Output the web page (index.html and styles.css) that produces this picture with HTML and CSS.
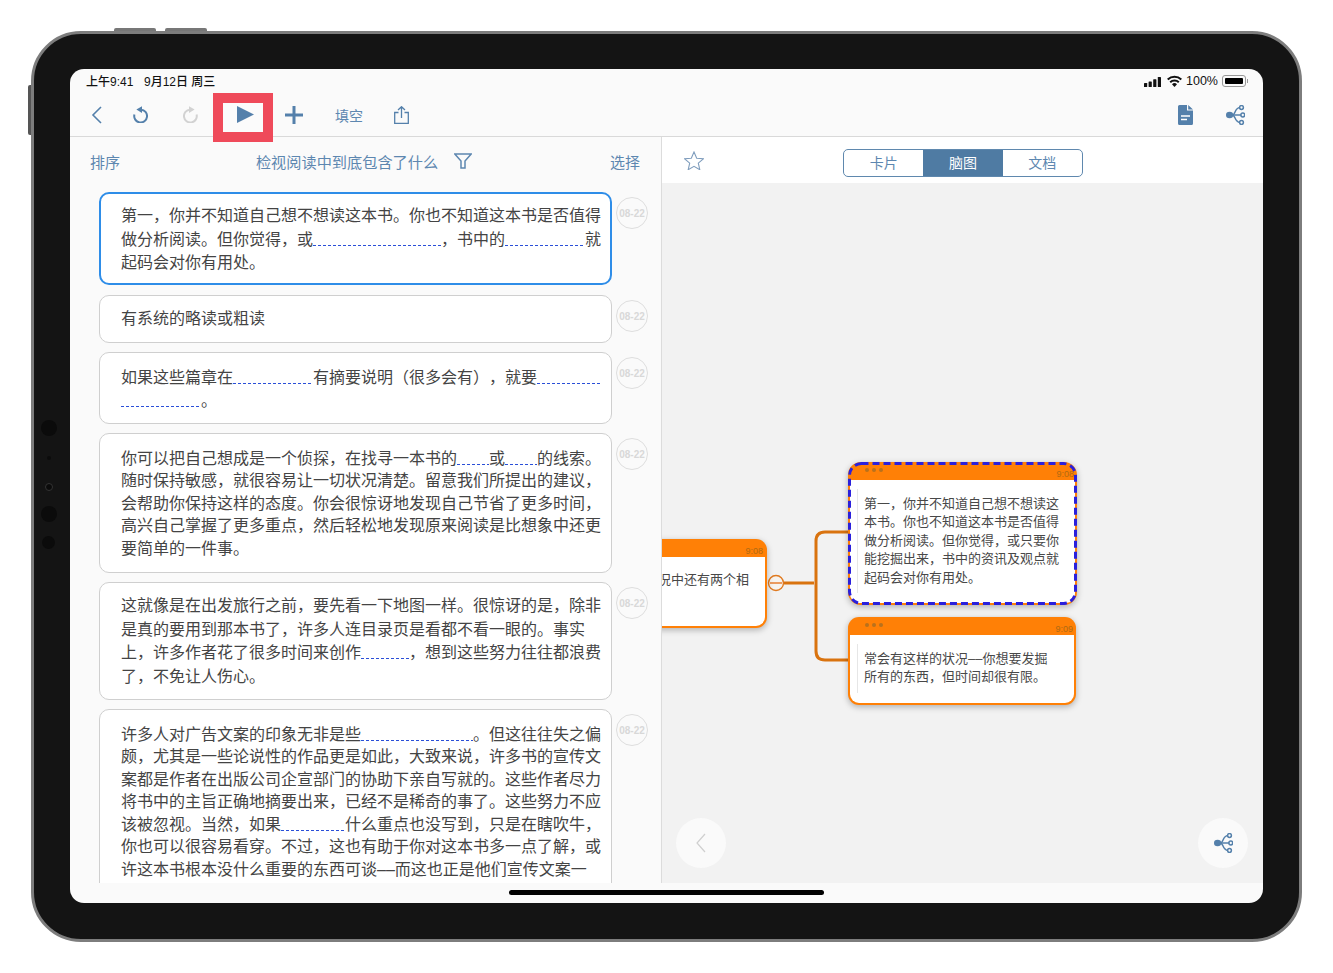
FILE: index.html
```html
<!DOCTYPE html>
<html lang="zh-CN">
<head>
<meta charset="utf-8">
<title>检视阅读</title>
<link rel="stylesheet" href="styles.css">
</head>
<body>
<div class="device">
  <span class="hw hw-top1"></span><span class="hw hw-top2"></span><span class="hw hw-side"></span>
  <span class="cam cam-a"></span><span class="cam cam-b"></span><span class="cam cam-c"></span><span class="cam cam-d"></span><span class="cam cam-e"></span>
  <div class="screen">
    <div class="status">
      <span class="time">上午9:41</span><span class="date">9月12日 周三</span>
      <svg class="st-signal" viewBox="0 0 17 10"><rect x="0" y="6" width="3.2" height="4" rx=".6"/><rect x="4.6" y="4.5" width="3.2" height="5.5" rx=".6"/><rect x="9.2" y="2.2" width="3.2" height="7.8" rx=".6"/><rect x="13.8" y="0" width="3.2" height="10" rx=".6"/></svg>
      <svg class="st-wifi" viewBox="0 0 15 12"><path d="M7.5 12 5 9.2a3.6 3.6 0 0 1 5 0Z"/><path d="M3.9 8 2.5 6.5a7.4 7.4 0 0 1 10 0L11.1 8a5.3 5.3 0 0 0-7.2 0Z"/><path d="M1.4 5.2 0 3.7a11 11 0 0 1 15 0l-1.4 1.5a9 9 0 0 0-12.2 0Z"/></svg>
      <span class="pct">100%</span>
      <span class="battery"><span class="battery-fill"></span></span><span class="battery-tip"></span>
    </div>
    <div class="toolbar">
      <svg class="tb tb-back" viewBox="0 0 11 18"><path d="M10 1 2 9l8 8" fill="none" stroke="#5480ab" stroke-width="1.6"/></svg>
      <svg class="tb tb-undo" viewBox="0 0 15 17"><path d="M8 3.7A6.4 6.4 0 1 1 1.4 8.6" fill="none" stroke="#5480ab" stroke-width="2"/><path d="M9 .2V7L3.4 3.6Z" fill="#5480ab"/></svg>
      <svg class="tb tb-redo" viewBox="0 0 15 17"><path d="M7 3.7A6.4 6.4 0 1 0 13.6 8.6" fill="none" stroke="#d2d2d2" stroke-width="2"/><path d="M6 .2V7l5.6-3.4Z" fill="#d2d2d2"/></svg>
      <div class="play"><svg class="play-icon" viewBox="0 0 17 17"><path d="M0 0 17 8.5 0 17Z" fill="#5480ab"/></svg></div>
      <svg class="tb tb-plus" viewBox="0 0 18 18"><path d="M9 0v18M0 9h18" stroke="#5480ab" stroke-width="3"/></svg>
      <span class="tb-text">填空</span>
      <svg class="tb tb-share" viewBox="0 0 15 18"><path d="M4.5 6.5H.7v10.8h13.6V6.5h-3.8M7.5 12V1M4 4l3.5-3.3L11 4" fill="none" stroke="#5480ab" stroke-width="1.3"/></svg>
      <svg class="tb tb-doc" viewBox="0 0 15 20"><path d="M1.5 0H9v5.5h6V18.5a1.5 1.5 0 0 1-1.5 1.5h-12A1.5 1.5 0 0 1 0 18.5v-17A1.5 1.5 0 0 1 1.5 0ZM10.2 0 15 4.4h-4.8Z" fill="#5480ab"/><path d="M3 11h9M3 14.5h6" stroke="#fff" stroke-width="1.6"/></svg>
      <svg class="tb tb-map" viewBox="0 0 19 20"><ellipse cx="3.6" cy="10" rx="3.6" ry="3.2" fill="#5480ab"/><g fill="none" stroke="#5480ab" stroke-width="1.5"><path d="M3 10h12"/><path d="M6 10c4 0 2-7 8-7.5"/><path d="M6 10c4 0 2 7 8 7.5"/><circle cx="15.5" cy="2.5" r="1.9"/><circle cx="16.8" cy="10" r="1.9"/><circle cx="15.5" cy="17.5" r="1.9"/></g></svg>
    </div>
    <div class="main">
      <section class="left">
        <div class="left-head">
          <span class="link">排序</span>
          <span class="head-title">检视阅读中到底包含了什么<svg class="funnel" viewBox="0 0 18 16"><path d="M.8 1h16.4L11 8v7H7V8Z" fill="none" stroke="#5d87b0" stroke-width="1.5"/></svg></span>
          <span class="link">选择</span>
        </div>
        <div class="list">
          <div class="row">
            <div class="note note-active">第一，你并不知道自己想不想读这本书。你也不知道这本书是否值得做分析阅读。但你觉得，或<span class="blank b8"></span>，书中的<span class="blank b5"></span>就起码会对你有用处。</div>
            <span class="stamp">08-22</span>
          </div>
          <div class="row">
            <div class="note note-single">有系统的略读或粗读</div>
            <span class="stamp">08-22</span>
          </div>
          <div class="row">
            <div class="note note-wide">如果这些篇章在<span class="blank b5"></span>有摘要说明（很多会有），就要<span class="blank b4"></span><span class="blank b5"></span>。</div>
            <span class="stamp">08-22</span>
          </div>
          <div class="row">
            <div class="note note-plain">你可以把自己想成是一个侦探，在找寻一本书的<span class="blank b2"></span>或<span class="blank b2"></span>的线索。随时保持敏感，就很容易让一切状况清楚。留意我们所提出的建议，会帮助你保持这样的态度。你会很惊讶地发现自己节省了更多时间，高兴自己掌握了更多重点，然后轻松地发现原来阅读是比想象中还更要简单的一件事。</div>
            <span class="stamp">08-22</span>
          </div>
          <div class="row">
            <div class="note note-loose">这就像是在出发旅行之前，要先看一下地图一样。很惊讶的是，除非是真的要用到那本书了，许多人连目录页是看都不看一眼的。事实上，许多作者花了很多时间来创作<span class="blank b3"></span>，想到这些努力往往都浪费了，不免让人伤心。</div>
            <span class="stamp">08-22</span>
          </div>
          <div class="row">
            <div class="note note-plain">许多人对广告文案的印象无非是些<span class="blank b7"></span>。但这往往失之偏颇，尤其是一些论说性的作品更是如此，大致来说，许多书的宣传文案都是作者在出版公司企宣部门的协助下亲自写就的。这些作者尽力将书中的主旨正确地摘要出来，已经不是稀奇的事了。这些努力不应该被忽视。当然，如果<span class="blank b4"></span>什么重点也没写到，只是在瞎吹牛，你也可以很容易看穿。不过，这也有助于你对这本书多一点了解，或许这本书根本没什么重要的东西可谈––而这也正是他们宣传文案一</div>
            <span class="stamp">08-22</span>
          </div>
        </div>
      </section>
      <section class="right">
        <div class="right-head">
          <svg class="star" viewBox="0 0 20 19"><path d="M10 1l2.7 6.2 6.6.6-5 4.4 1.5 6.5L10 15.3l-5.8 3.4 1.5-6.5-5-4.4 6.6-.6Z" fill="none" stroke="#7f9dbd" stroke-width="1.1"/></svg>
          <div class="segments">
            <span class="seg">卡片</span>
            <span class="seg seg-on">脑图</span>
            <span class="seg">文档</span>
          </div>
        </div>
        <div class="canvas">
          <svg class="links" viewBox="0 0 601 700">
            <path d="M122 400H152M186 349H163Q154 349 154 358V468Q154 477 163 477H186" fill="none" stroke="#d9730f" stroke-width="3"/>
            <circle cx="114" cy="400" r="7.5" fill="#f7f3ee" stroke="#e07a20" stroke-width="1.4"/>
            <path d="M108 400h12" stroke="#e8853a" stroke-width="1.6"/>
          </svg>
          <div class="node node-a">
            <div class="node-bar"><span class="node-time node-time-a">9:08</span></div>
            <div class="node-body node-body-a">情况中还有两个相</div>
          </div>
          <div class="node node-b">
            <div class="node-bar"><span class="node-dots"><i></i><i></i><i></i></span><span class="node-time">9:08</span></div>
            <div class="node-body"><p class="node-text">第一，你并不知道自己想不想读这本书。你也不知道这本书是否值得做分析阅读。但你觉得，或只要你能挖掘出来，书中的资讯及观点就起码会对你有用处。</p></div>
            <svg class="node-dash" viewBox="0 0 229 143"><rect x="1.5" y="1.5" width="226" height="140" rx="12" fill="none" stroke="#2a20dc" stroke-width="3" stroke-dasharray="7 4"/></svg>
          </div>
          <div class="node node-c">
            <div class="node-bar"><span class="node-dots"><i></i><i></i><i></i></span><span class="node-time">9:09</span></div>
            <div class="node-body"><p class="node-text">常会有这样的状况––你想要发掘所有的东西，但时间却很有限。</p></div>
          </div>
          <div class="round round-l"><svg class="round-chev" viewBox="0 0 10 20"><path d="M9 1 1 10l8 9" fill="none" stroke="#cfcfcf" stroke-width="1.2"/></svg></div>
          <div class="round round-r"><svg class="round-map" viewBox="0 0 19 20"><ellipse cx="3.6" cy="10" rx="3.6" ry="3.2" fill="#5480ab"/><g fill="none" stroke="#5480ab" stroke-width="1.5"><path d="M3 10h12"/><path d="M6 10c4 0 2-7 8-7.5"/><path d="M6 10c4 0 2 7 8 7.5"/><circle cx="15.5" cy="2.5" r="1.9"/><circle cx="16.8" cy="10" r="1.9"/><circle cx="15.5" cy="17.5" r="1.9"/></g></svg></div>
        </div>
      </section>
    </div>
    <div class="home"><span class="home-bar"></span></div>
  </div>
</div>
</body>
</html>
```
FILE: styles.css
```css
* { box-sizing: border-box; }
html, body { margin: 0; background: #fff; }
body {
  height: 973px;
  overflow: hidden;
  font-family: "Liberation Sans", "Noto Sans CJK SC", sans-serif;
  color: #484848;
  text-spacing-trim: space-all;
}
.device {
  position: relative;
  width: 1271px;
  height: 911px;
  margin: 31px 0 0 31px;
  padding: 35px 36px 36px;
  background: #141414;
  border: 3px solid #7d7d7d;
  border-radius: 50px;
}
.hw { position: absolute; background: #777; }
.hw-top1 { left: 80px; top: -6px; width: 42px; height: 3px; border-radius: 2px 2px 0 0; }
.hw-top2 { left: 131px; top: -6px; width: 42px; height: 3px; border-radius: 2px 2px 0 0; }
.hw-side { left: -6px; top: 51px; width: 3px; height: 50px; border-radius: 2px 0 0 2px; background: #555; }
.cam { position: absolute; border-radius: 50%; background: #0b0b0b; }
.cam-a { left: 7px; top: 386px; width: 16px; height: 16px; }
.cam-b { left: 13px; top: 422px; width: 4px; height: 4px; }
.cam-c { left: 11px; top: 449px; width: 8px; height: 8px; background: #0b0b0b; border: 1px solid #333; }
.cam-d { left: 7px; top: 472px; width: 16px; height: 16px; }
.cam-e { left: 8px; top: 502px; width: 13px; height: 13px; }

.screen {
  display: flex;
  flex-direction: column;
  width: 1193px;
  height: 834px;
  overflow: hidden;
  background: #fafafa;
  border-radius: 14px;
}

.status {
  display: flex;
  align-items: center;
  flex: none;
  height: 24px;
  padding: 0 15px 0 16px;
  font-size: 12px;
  font-weight: 500;
  color: #111;
}
.time { width: 58px; margin-top: -2px; }
.date { flex: 1; margin-top: -2px; }
.st-signal { width: 17px; height: 10px; margin-top: 1px; fill: #111; }
.st-wifi { width: 15px; height: 12px; margin-left: 6px; margin-top: -1px; fill: #111; }
.pct { margin: -1px 0 0 4px; width: 31px; font-size: 12.5px; text-align: right; }
.battery {
  display: block;
  width: 24px;
  height: 12px;
  margin-left: 5px;
  padding: 2px;
  border: 1px solid #999;
  border-radius: 3px;
}
.battery-fill { display: block; height: 100%; background: #000; border-radius: 1px; }
.battery-tip { width: 1px; height: 4px; margin-left: 1px; background: #999; }

.toolbar {
  display: flex;
  align-items: center;
  flex: none;
  height: 44px;
  padding: 0 18px 0 21px;
  border-bottom: 1px solid #d9d9d9;
}
.tb { display: block; flex: none; }
.tb-back { width: 11px; height: 18px; }
.tb-undo { width: 15px; height: 17px; margin-left: 31px; }
.tb-redo { width: 15px; height: 17px; margin-left: 35px; }
.play {
  position: relative;
  z-index: 2;
  display: flex;
  align-items: center;
  justify-content: center;
  flex: none;
  width: 40px;
  height: 29px;
  margin: 5px 0 0 24.5px;
  padding: 0 0 5px 5px;
  background: #fbfbfb;
  outline: 10px solid #ef4a5a;
}
.play-icon { width: 17px; height: 17px; }
.tb-plus { width: 18px; height: 18px; margin-left: 22.5px; }
.tb-text { flex: none; width: 28px; margin-left: 32px; font-size: 14px; color: #5d87b0; white-space: nowrap; }
.tb-share { width: 15px; height: 18px; margin-left: 31px; }
.tb-doc { width: 15px; height: 20px; margin-left: auto; }
.tb-map { width: 19px; height: 20px; margin-left: 33px; }

.main { display: flex; flex: none; height: 746px; }

.left {
  flex: none;
  width: 592px;
  overflow: hidden;
  border-right: 1px solid #dcdcdc;
}
.left-head {
  display: flex;
  align-items: center;
  justify-content: space-between;
  height: 48px;
  padding: 0 21px 0 20px;
  font-size: 15px;
  color: #5d87b0;
}
.head-title { display: flex; align-items: center; margin-left: -2px; font-size: 15.2px; }
.funnel { width: 18px; height: 16px; margin-left: 16px; }
.list { padding: 7px 0 0 29px; }
.row { display: flex; align-items: flex-start; margin-bottom: 9px; }
.row:first-child { margin-bottom: 10px; }

.note {
  flex: none;
  width: 513px;
  padding: 0 8px 0 21px;
  background: #fff;
  border: 1px solid #cfcfcf;
  border-radius: 10px;
  font-size: 16px;
  line-height: 22.5px;
  color: #444;
}
.note-plain { padding-top: 13.75px; padding-bottom: 11.75px; }
.note-single { padding-top: 11.75px; padding-bottom: 11.75px; }
.note-wide { padding-top: 13px; padding-bottom: 11px; line-height: 23px; }
.note-loose { padding-top: 11.3px; padding-bottom: 11.1px; line-height: 23.4px; }
.note-active {
  padding: 10.3px 7px 8.5px 20px;
  line-height: 23.4px;
  border: 2px solid #2e8de8;
}

.blank {
  display: inline-block;
  height: 1px;
  background: repeating-linear-gradient(90deg, #2a4fd8 0 3px, transparent 3px 5px);
  vertical-align: -1px;
}
.b2 { width: 32px; }
.b3 { width: 48px; }
.b4 { width: 64px; }
.b5 { width: 80px; }
.b7 { width: 112px; }
.b8 { width: 128px; }

.stamp {
  display: flex;
  align-items: center;
  justify-content: center;
  flex: none;
  width: 32px;
  height: 32px;
  margin: 5px 0 0 4px;
  border: 1.5px solid #dedede;
  border-radius: 50%;
  font-size: 10px;
  font-weight: 700;
  color: #d8d8d8;
  white-space: nowrap;
}

.right { display: flex; flex-direction: column; flex: 1; background: #fff; }
.right-head { display: flex; align-items: center; flex: none; height: 46px; padding-left: 22px; }
.star { width: 20px; height: 19px; }
.segments {
  display: flex;
  width: 240px;
  height: 28px;
  margin: 6px 0 0 139px;
  overflow: hidden;
  border: 1px solid #5f88ae;
  border-radius: 5px;
}
.seg {
  flex: 1;
  font-size: 14px;
  line-height: 27px;
  text-align: center;
  color: #5d87b0;
}
.seg-on { background: #4f7ba3; color: #fff; }

.canvas { position: relative; flex: 1; overflow: hidden; background: #f2f2f2; }
.links { position: absolute; left: 0; top: 0; width: 601px; height: 700px; }

.node {
  position: absolute;
  display: flex;
  flex-direction: column;
  overflow: hidden;
  padding: 2px;
  background: #ff8006;
  border-radius: 11px;
  box-shadow: 0 2px 6px rgba(0, 0, 0, .28);
}
.node-a { left: -40px; top: 356px; width: 145px; height: 89px; }
.node-b { left: 186px; top: 279px; width: 229px; height: 143px; border-radius: 13px; }
.node-c { left: 186px; top: 434px; width: 228px; height: 88px; }
.node-dash { position: absolute; left: 0; top: 0; width: 229px; height: 143px; }
.node-bar {
  display: flex;
  justify-content: space-between;
  flex: none;
  height: 16px;
  padding: 0 1px 0 15px;
}
.node-dots { display: flex; gap: 3px; padding-top: 4px; }
.node-dots i { display: block; width: 4px; height: 4px; border-radius: 50%; background: #b9711d; }
.node-time { padding-top: 5px; font-size: 9px; line-height: 10px; color: #b06a12; }
.node-time-a { margin-left: auto; padding-right: 1px; }
.node-body {
  flex: 1;
  padding: 9px 6px 10px 7px;
  background: #fff;
  border-radius: 0 0 9px 9px;
  font-size: 13px;
  line-height: 18.6px;
  color: #484848;
}
.node-body-a { padding: 14px 0 0 21px; white-space: nowrap; }
.node-text { margin: 0; height: 100%; padding: 5.5px 8px 0 6px; border-left: 1px solid #e6e6e6; }

.round {
  position: absolute;
  bottom: 15px;
  display: flex;
  align-items: center;
  justify-content: center;
  width: 50px;
  height: 50px;
  border-radius: 50%;
  background: #fafafa;
}
.round-l { left: 14px; }
.round-r { right: 15px; }
.round-chev { width: 10px; height: 20px; }
.round-map { width: 19px; height: 20px; }

.home { display: flex; justify-content: center; flex: none; height: 20px; padding-top: 7px; }
.home-bar { display: block; width: 315px; height: 5px; border-radius: 3px; background: #000; }
```
